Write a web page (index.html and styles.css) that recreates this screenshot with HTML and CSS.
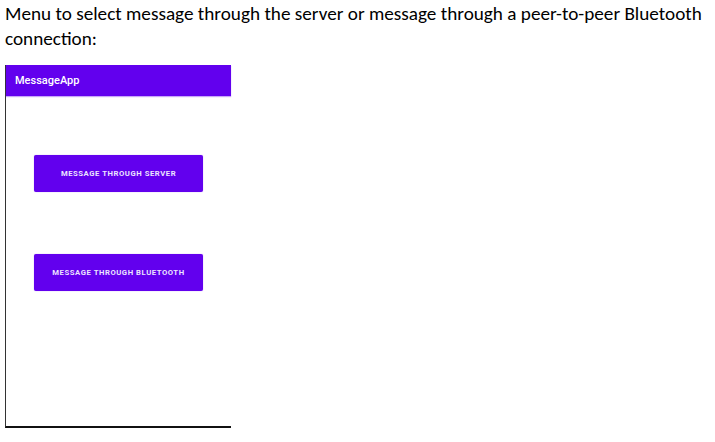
FILE: index.html
```html
<!DOCTYPE html>
<html>
<head>
<meta charset="utf-8">
<link rel="stylesheet" href="styles.css">
</head>
<body>
<p class="caption">Menu to select message through the server or message through a peer-to-peer Bluetooth connection:</p>
<div class="phone">
  <div class="appbar">MessageApp</div>
  <div class="content">
    <button class="btn">MESSAGE THROUGH SERVER</button>
    <button class="btn">MESSAGE THROUGH BLUETOOTH</button>
  </div>
</div>
</body>
</html>
```
FILE: styles.css
```css
html, body {
  margin: 0;
  padding: 0;
  background: #ffffff;
}
.caption {
  margin: 0;
  padding: 1px 0 0 5px;
  width: 708px;
  font-family: Carlito, "Liberation Sans", sans-serif;
  font-size: 19.2px;
  line-height: 25px;
  color: #000;
}
.phone {
  margin: 14px 0 0 5px;
  width: 225px;
  height: 361px;
  border-left: 1px solid #333;
  border-bottom: 2px solid #111;
  display: flex;
  flex-direction: column;
}
.appbar {
  height: 31px;
  background: #6200ee;
  color: #ffffff;
  font-family: Roboto, "Liberation Sans", sans-serif;
  font-weight: 500;
  font-size: 11px;
  display: flex;
  align-items: center;
  padding-left: 9px;
  box-shadow: 0 1px 1px rgba(98, 0, 238, 0.35);
}
.content {
  display: flex;
  flex-direction: column;
  gap: 62px;
  padding: 59px 0 0 28px;
}
.btn {
  width: 169px;
  height: 37px;
  border: none;
  border-radius: 2px;
  background: #6200ee;
  color: #ece4ff;
  font-family: Roboto, "Liberation Sans", sans-serif;
  font-weight: 700;
  font-size: 7.7px;
  letter-spacing: 0.55px;
  padding: 0;
  box-shadow: 0 0 1px rgba(98, 0, 238, 0.5);
}
```
